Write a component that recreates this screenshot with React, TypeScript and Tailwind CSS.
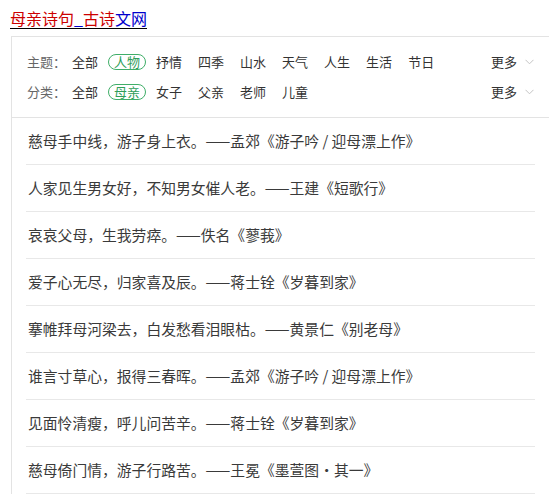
import React from "react";

const FONT = '"Noto Sans CJK SC", "Microsoft YaHei", sans-serif';

const themes = ["抒情", "四季", "山水", "天气", "人生", "生活", "节日"];
const kinds = ["女子", "父亲", "老师", "儿童"];

const quotes = [
  "慈母手中线，游子身上衣。——孟郊《游子吟 / 迎母漂上作》",
  "人家见生男女好，不知男女催人老。——王建《短歌行》",
  "哀哀父母，生我劳瘁。——佚名《蓼莪》",
  "爱子心无尽，归家喜及辰。——蒋士铨《岁暮到家》",
  "搴帷拜母河梁去，白发愁看泪眼枯。——黄景仁《别老母》",
  "谁言寸草心，报得三春晖。——孟郊《游子吟 / 迎母漂上作》",
  "见面怜清瘦，呼儿问苦辛。——蒋士铨《岁暮到家》",
  "慈母倚门情，游子行路苦。——王冕《墨萱图·其一》",
];

const Chevron = () => (
  <svg width="9" height="6" viewBox="0 0 9 6" className="ml-[8px]" aria-hidden="true">
    <path d="M0.5 0.8 L4.5 4.8 L8.5 0.8" fill="none" stroke="#c4c4c4" strokeWidth="1" />
  </svg>
);

/**
 * One filter row: label, "全部", the active pill, then the rest
 */
const FilterRow = ({ label, active, items }: { label: string; active: string; items: string[] }) => (
  <div className="flex h-[30px] items-center justify-between pr-[15px]">
    <div className="flex items-center text-[13px]">
      <span className="w-[45px] text-[#666]">{label}：</span>
      <span className="mr-[10px] text-[#333]">全部</span>
      <span className="mr-[10px] flex h-[16px] items-center rounded-full border border-[#3fae68] px-[5px] text-[#2f9e5a]">
        {active}
      </span>
      {items.map((item) => (
        <span key={item} className="mr-[16px] text-[#333]">
          {item}
        </span>
      ))}
    </div>
    <div className="flex items-center text-[13px] text-[#333]">
      更多
      <Chevron />
    </div>
  </div>
);

export default function App() {
  return (
    <div className="min-h-[498px] w-[549px] overflow-hidden bg-white" style={{ fontFamily: FONT }}>
      {/* Title link */}
      <div className="pl-[10px] pt-[8px] text-[16px] leading-[20px] underline decoration-1 underline-offset-[3px]">
        <span className="text-[#cc0000]">母亲诗句</span>
        <span className="text-[#0000cc]">_</span>
        <span className="text-[#cc0000]">古诗</span>
        <span className="text-[#0000cc]">文网</span>
      </div>

      {/* Panel */}
      <div className="ml-[11px] mt-[8px] border-l border-t border-[#e3e3e3]">
        <div className="border-b border-[#e3e3e3] py-[10px] pl-[15px]">
          <FilterRow label="主题" active="人物" items={themes} />
          <FilterRow label="分类" active="母亲" items={kinds} />
        </div>

        <div className="ml-[14px] mr-[14px]">
          {quotes.map((q, i) => (
            <div
              key={i}
              className="flex h-[47px] items-center border-b border-[#e8e8e8] pl-[2px] text-[14.8px] text-[#3a3a3a]"
            >
              {q}
            </div>
          ))}
        </div>
      </div>
    </div>
  );
}
